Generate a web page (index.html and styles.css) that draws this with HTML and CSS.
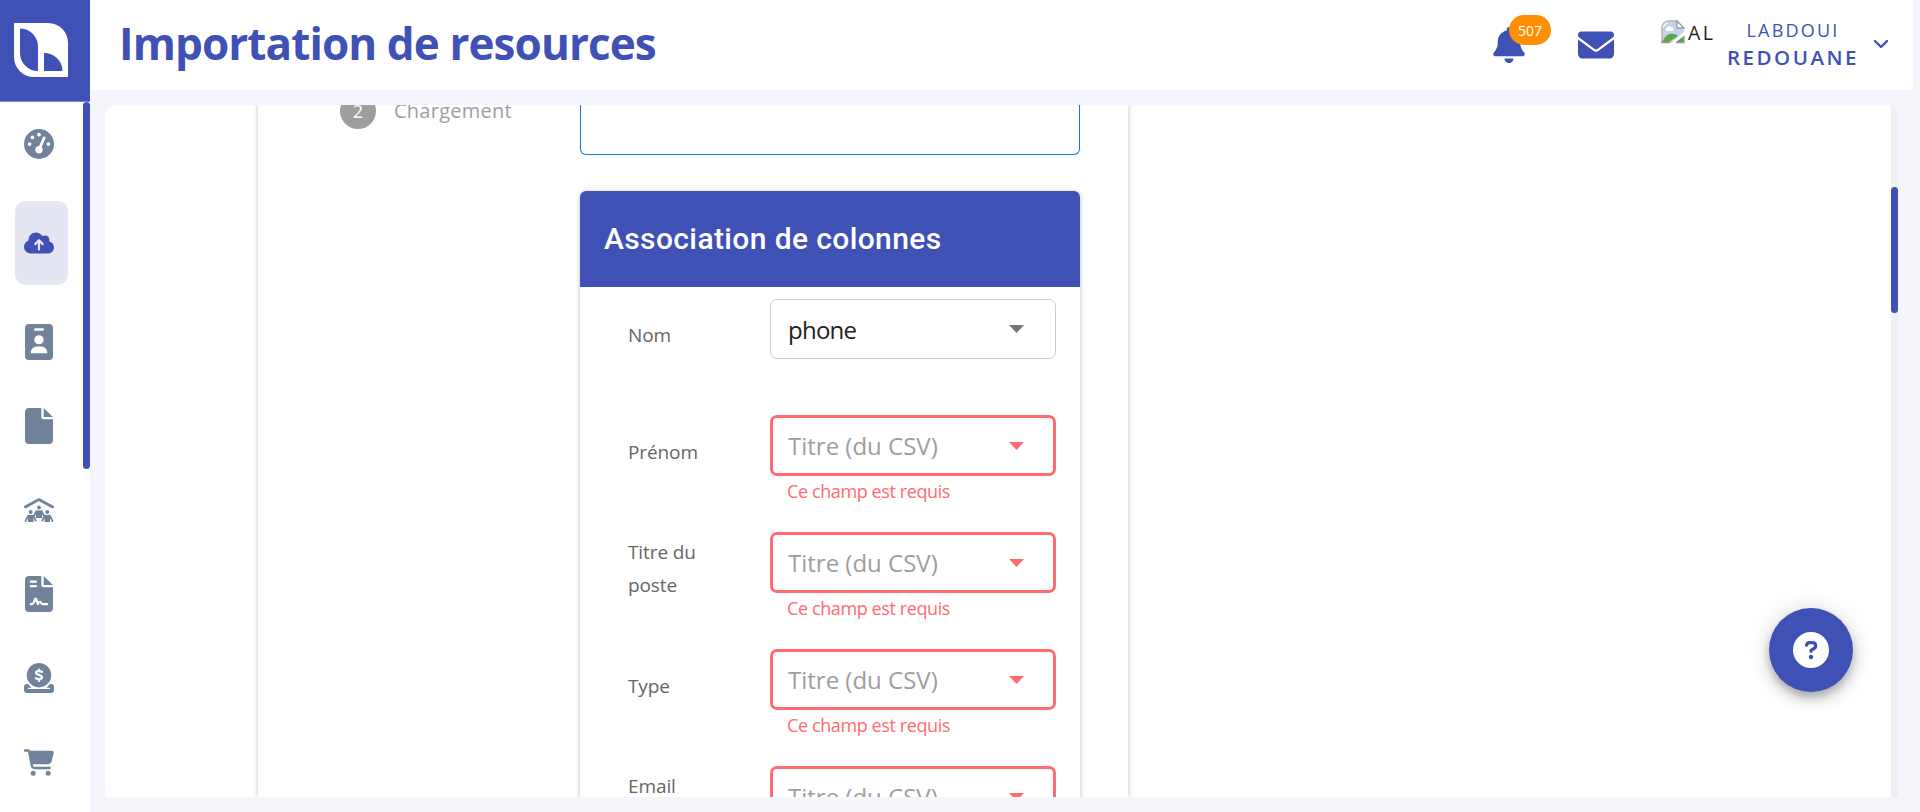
FILE: index.html
```html
<!DOCTYPE html>
<html lang="fr">
<head>
<meta charset="utf-8">
<title>Importation de resources</title>
<link rel="stylesheet" href="styles.css">
</head>
<body>
<div class="app">
  <aside class="sidebar">
    <a class="logo">
      <svg width="54" height="54" viewBox="0 0 54 54"><path fill="#fff" d="M0 0h34a20 20 0 0 1 20 20v34H20A20 20 0 0 1 0 34z"/><path fill="#3f51b5" d="M6 5.500a18 18 0 0 1 18 18V48A18 18 0 0 1 6 30zM30 30a18.500 18 0 0 1 18.500 18H30z"/></svg>
    </a>
    <div class="side-body">
      <nav class="nav">
        <a class="item"><svg width="30" height="30" viewBox="0 0 512 512"><path fill-rule="evenodd" d="M0 256a256 256 0 1 1 512 0A256 256 0 1 1 0 256zM288 96a32 32 0 1 0 -64 0 32 32 0 1 0 64 0zM256 416c35.300 0 64-28.700 64-64c0-17.400-6.900-33.100-18.100-44.600L366 161.700c5.300-12.100-.2-26.300-12.300-31.600s-26.300 .2-31.600 12.300L257.900 288c-.6 0-1.300 0-1.900 0c-35.300 0-64 28.700-64 64s28.700 64 64 64zM176 144a32 32 0 1 0 -64 0 32 32 0 1 0 64 0zM96 288a32 32 0 1 0 0-64 32 32 0 1 0 0 64zm352-32a32 32 0 1 0 -64 0 32 32 0 1 0 64 0z"/></svg></a>
        <a class="item active"><svg width="30" height="24" viewBox="0 0 640 512"><path d="M144 480C64.500 480 0 415.500 0 336c0-62.800 40.200-116.200 96.200-135.900c-.1-2.700-.2-5.400-.2-8.100c0-88.400 71.600-160 160-160c59.300 0 111 32.200 138.700 80.200C409.900 102 428.300 96 448 96c53 0 96 43 96 96c0 12.200-2.300 23.800-6.400 34.600C596 238.400 640 290.100 640 352c0 70.700-57.300 128-128 128H144zm79-217c-9.400 9.400-9.400 24.600 0 33.900s24.600 9.400 33.900 0l39-39V392c0 13.300 10.700 24 24 24s24-10.700 24-24V257.900l39 39c9.400 9.400 24.600 9.400 33.900 0s9.400-24.600 0-33.900l-80-80c-9.400-9.400-24.600-9.400-33.900 0l-80 80z"/></svg></a>
        <a class="item"><svg width="28" height="36" viewBox="0 0 384 512" preserveAspectRatio="none"><path fill-rule="evenodd" d="M56 0H328a56 56 0 0 1 56 56V456a56 56 0 0 1-56 56H56a56 56 0 0 1-56-56V56A56 56 0 0 1 56 0zM128 62v34h128V62zM192 288a64 64 0 1 0 0-128 64 64 0 1 0 0 128zM160 320a80 80 0 0 0-80 80v16H304v-16a80 80 0 0 0-80-80z"/></svg></a>
        <a class="item"><svg width="28" height="36" viewBox="0 0 384 512" preserveAspectRatio="none"><path d="M0 56A56 56 0 0 1 56 0H224V128a32 32 0 0 0 32 32H384V456a56 56 0 0 1-56 56H56a56 56 0 0 1-56-56zM256 0 384 128H256z"/></svg></a>
        <a class="item"><svg width="30" height="24" viewBox="0 0 30 24"><path fill="none" stroke="#71839b" stroke-width="2.600" stroke-linecap="round" stroke-linejoin="round" d="M1.300 9 15 1.500 28.700 9"/><circle cx="15" cy="9.500" r="1.900"/><circle cx="6.700" cy="14" r="1.900"/><circle cx="23.300" cy="14" r="1.900"/><path d="M12 12.500h6v7.500h-6zM4 17h5.500v7H4zM20.500 17H26v7h-5.500z"/><path fill="none" stroke="#71839b" stroke-width="1.700" stroke-linecap="round" d="M12.500 13 10.500 17M17.500 13l2 4M4.300 17.500 1.500 23M9.200 17.500l2.500 5M20.800 17.500l-2.500 5M25.700 17.500 28.500 23"/></svg></a>
        <a class="item"><svg width="28" height="36" viewBox="0 0 384 512" preserveAspectRatio="none"><path d="M0 56A56 56 0 0 1 56 0H224V128a32 32 0 0 0 32 32H384V456a56 56 0 0 1-56 56H56a56 56 0 0 1-56-56zM256 0 384 128H256z"/><path fill="none" stroke="#fff" stroke-width="30" stroke-linecap="round" stroke-linejoin="round" d="M80 80h70M80 144h70M80 400h10c18 0 27-8 32-24l14-44c5-14 16-14 20 0l20 68c10-25 28-42 42-22 8 16 14 22 26 22h60"/></svg></a>
        <a class="item"><svg width="30" height="30" viewBox="0 0 30 30"><path fill-rule="evenodd" d="M3 21h1.300a14.500 14.500 0 0 0 3.300 3.700H4.500a.6.600 0 0 0 0 1.300h21a.6.600 0 0 0 0-1.300h-3.100A14.500 14.500 0 0 0 25.700 21H27a3 3 0 0 1 3 3v3a3 3 0 0 1-3 3H3a3 3 0 0 1-3-3v-3a3 3 0 0 1 3-3z"/><circle cx="15" cy="12.200" r="12.200"/><path fill="none" stroke="#fff" stroke-width="2.200" stroke-linecap="round" d="M15 6.500v1.500M15 16.500V18M18 8.800c-2-1-6-1.200-6 1s6 2 6 4.400-4 2.300-6.200 1"/></svg></a>
        <a class="item"><svg width="30" height="27" viewBox="0 0 576 512"><path d="M0 24C0 10.700 10.700 0 24 0H69.500c22 0 41.500 12.800 50.600 32h411c26.300 0 45.500 25 38.600 50.400l-41 152.300c-8.500 31.400-37 53.300-69.500 53.300H170.700l5.400 28.500c2.200 11.300 12.100 19.500 23.600 19.500H488c13.300 0 24 10.700 24 24s-10.700 24-24 24H199.700c-34.600 0-64.300-24.600-70.700-58.500L77.400 54.500c-.7-3.800-4-6.500-7.900-6.500H24C10.700 48 0 37.300 0 24zM128 464a48 48 0 1 1 96 0 48 48 0 1 1 -96 0zm336-48a48 48 0 1 1 0 96 48 48 0 1 1 0-96z"/></svg></a>
      </nav>
      <div class="side-scroll"><div class="side-thumb"></div></div>
    </div>
  </aside>
  <div class="main">
    <header class="topbar">
      <h1 class="title"><span>Importation de resources</span></h1>
      <div class="bell">
        <svg width="32" height="36" viewBox="0 0 448 512"><path d="M224 0c-17.700 0-32 14.300-32 32V51.200C119 66 64 130.600 64 208v18.800c0 47-17.300 92.400-48.500 127.600l-7.400 8.300c-8.400 9.400-10.400 22.900-5.300 34.400S19.400 416 32 416H416c12.600 0 24-7.400 29.200-18.900s3.100-25-5.300-34.400l-7.400-8.300C401.300 319.200 384 273.900 384 226.800V208c0-77.400-55-142-128-156.800V32c0-17.700-14.300-32-32-32zm45.300 493.300c12-12 18.700-28.300 18.700-45.300H160c0 17 6.700 33.300 18.700 45.300s28.300 18.700 45.300 18.700s33.300-6.700 45.300-18.700z"/></svg>
        <span class="badge">507</span>
      </div>
      <svg class="mail" width="36" height="36" viewBox="0 0 512 512"><path d="M48 64C21.500 64 0 85.500 0 112c0 15.100 7.100 29.300 19.200 38.400L236.800 313.600c11.400 8.500 27 8.500 38.400 0L492.800 150.400c12.100-9.100 19.200-23.300 19.200-38.400c0-26.500-21.500-48-48-48H48zM0 176V384c0 35.300 28.700 64 64 64H448c35.300 0 64-28.700 64-64V176L294.400 339.200c-22.800 17.100-54 17.100-76.800 0L0 176z"/></svg>
      <div class="avatar">
        <svg width="24" height="24" viewBox="0 0 24 24"><path fill="#c3d3f2" d="M1 23V9l7-8h8v7h7v4L12 23z"/><path fill="none" stroke="#b5b5b5" stroke-width="1.500" d="M1 22V8a7 7 0 0 1 7-7h8"/><path fill="#fff" d="M5 9a3 3 0 0 1 5-2 2.500 2.500 0 0 1 2 4H5z"/><path fill="#58a83b" d="M1.500 22c3-9 11-10 15.500-6l-9 6z"/><path fill="#fff" stroke="#999" stroke-width="1.300" d="M16 1l7 7h-7z"/><path fill="#fff" d="M9 24 24 11v4L14 24z"/><path fill="#58a83b" d="M15 22l8-6v6z"/><path fill="none" stroke="#999" stroke-width="1.300" d="M0 22.500h9M15 22.500h8V16"/></svg>
        <span>AL</span>
      </div>
      <div class="user"><span class="last">LABDOUI</span><span class="first">REDOUANE</span></div>
      <svg class="chev" width="16" height="10" viewBox="0 0 16 10"><path fill="none" stroke="#3f51b5" stroke-width="2.400" stroke-linecap="round" stroke-linejoin="round" d="M2 2l6 6 6-6"/></svg>
    </header>
    <main class="content">
      <div class="scroller">
        <section class="wizard">
          <div class="steps"><span class="num">2</span><span class="step">Chargement</span></div>
          <div class="panel">
            <div class="drop"></div>
            <div class="card">
              <h2 class="card-head"><span>Association de colonnes</span></h2>
              <div class="rows">
                <div class="row first-row"><label class="label">Nom</label><div class="field"><div class="select"><span class="value">phone</span><i class="caret"></i></div></div></div>
                <div class="row"><label class="label">Prénom</label><div class="field"><div class="select error"><span class="hint">Titre (du CSV)</span><i class="caret"></i></div><p class="msg">Ce champ est requis</p></div></div>
                <div class="row"><label class="label">Titre du poste</label><div class="field"><div class="select error"><span class="hint">Titre (du CSV)</span><i class="caret"></i></div><p class="msg">Ce champ est requis</p></div></div>
                <div class="row"><label class="label">Type</label><div class="field"><div class="select error"><span class="hint">Titre (du CSV)</span><i class="caret"></i></div><p class="msg">Ce champ est requis</p></div></div>
                <div class="row"><label class="label">Email<br>principal</label><div class="field"><div class="select error"><span class="hint">Titre (du CSV)</span><i class="caret"></i></div></div></div>
              </div>
            </div>
          </div>
        </section>
      </div>
      <div class="track"><div class="thumb"></div></div>
    </main>
  </div>
  <button class="fab"><svg width="36" height="36" viewBox="0 0 36 36"><circle cx="18" cy="18" r="18" fill="#fff"/><path fill="none" stroke="#3f51b5" stroke-width="3.200" stroke-linecap="round" stroke-linejoin="round" d="M13.500 13.200c.3-1.800 1.300-2.600 3-2.600h2.800c3.800 0 4.500 4.400 1.600 6L18 18.300v1"/><circle cx="18" cy="25" r="2.200" fill="#3f51b5"/></svg></button>
</div>
</body>
</html>
```
FILE: styles.css
```css
* { box-sizing: border-box; }
body { margin: 0; font-family: "Open Sans", "Noto Sans", sans-serif; background: #f5f6fb; }
.app { display: flex; width: 100vw; height: 812px; overflow: hidden; }
svg { display: block; flex: none; }

.sidebar { width: 90px; flex: none; display: flex; flex-direction: column; background: #fff; }
.logo { height: 102px; flex: none; padding: 23px 0 0 14px; background: #3f51b5; border-bottom: 1px solid #7c83e0; }
.side-body { flex: 1; display: flex; min-height: 0; }
.nav { flex: 1; padding-left: 15px; overflow: hidden; }
.item { display: flex; width: 53px; height: 84px; padding-right: 5px; align-items: center; justify-content: center; fill: #71839b; }
.item.active { margin: 15px 0; background: #e4e6f3; border-radius: 10px; fill: #3f51b5; }
.side-scroll { width: 7px; }
.side-thumb { height: 367px; border-radius: 4px; background: #3f51b5; }

.main { flex: 1; min-width: 0; display: flex; flex-direction: column; }
.topbar { width: 1823px; height: 90px; flex: none; display: flex; align-items: flex-start; padding-left: 29px; background: #fff; fill: #3f51b5; color: #3f51b5; }
.title { flex: 1; margin: 0; font-size: 44px; line-height: 60px; font-weight: 700; letter-spacing: -0.9px; padding-top: 13px; white-space: nowrap; }
.bell { position: relative; width: 32px; margin: 27px 53px 0 0; }
.badge { position: absolute; left: 16px; top: -12px; width: 42px; height: 30px; border-radius: 15px; background: #ff8f00; color: #fff; font-size: 14px; line-height: 32px; text-align: center; }
.mail { margin: 27px 47px 0 0; }
.avatar { display: flex; width: 57px; gap: 3px; padding-top: 20px; color: #222; font-size: 19.500px; line-height: 26px; letter-spacing: 2.400px; }
.user { width: 150px; display: flex; flex-direction: column; align-items: center; padding-top: 17px; }
.last { font-size: 18px; line-height: 27px; letter-spacing: 2.200px; }
.first { font-size: 20.500px; line-height: 26px; font-weight: 600; letter-spacing: 2.500px; }
.chev { margin: 39px 24px 0 5px; }

.content { margin: 15px 22px 15px 15px; height: 692px; display: flex; overflow: hidden; border-radius: 12px 12px 0 0; background: #fff; }
.scroller { flex: 1; padding-left: 153px; overflow: hidden; }
.track { width: 7px; background: #f0f0f0; padding-top: 82px; }
.thumb { height: 126px; border-radius: 4px; background: #3f51b5; }
.wizard { width: 870px; height: 692px; display: flex; box-shadow: 0 0 5px rgba(0,0,0,.25); }
.steps { width: 322px; height: 24px; display: flex; align-items: flex-end; padding-left: 82px; }
.num { width: 36px; height: 36px; border-radius: 50%; background: #9e9e9e; color: #fff; font-size: 18px; line-height: 36px; text-align: center; flex: none; }
.step { color: #9e9e9e; font-size: 20px; line-height: 36px; margin-left: 18px; letter-spacing: .25px; }
.panel { width: 500px; }
.drop { height: 50px; border: 1px solid #1976d2; border-top: 0; border-radius: 0 0 6px 6px; }
.card { height: 700px; margin-top: 36px; border-radius: 6px; box-shadow: 0 1px 5px rgba(0,0,0,.26); background: #fff; }
.card-head { height: 96px; margin: 0; padding-left: 24px; border-radius: 6px 6px 0 0; background: #3f51b5; color: #fff; font: 500 30px/96px Roboto, sans-serif; letter-spacing: .38px; }
.rows { padding: 12px 24px 0 48px; }
.row { height: 117px; display: flex; }
.first-row { height: 116px; }
.label { width: 142px; height: 74px; padding-right: 50px; display: flex; align-items: center; color: #666; font-size: 19px; line-height: 33px; letter-spacing: -.1px; }
.first-row .label { height: 72px; }
.field { width: 286px; }
.select { height: 60px; display: flex; align-items: center; justify-content: space-between; padding: 0 31px 0 17px; border: 1px solid #ccc; border-radius: 7px; font-size: 24px; color: #222; }
.select.error { height: 61px; padding: 0 29px 0 15px; border: 3px solid #ff6b6e; }
.value { letter-spacing: -.75px; }
.hint { color: #9e9e9e; }
.caret { width: 15px; height: 8px; background: #757575; clip-path: polygon(0 0, 100% 0, 50% 100%); }
.error .caret { background: #ff6b6e; margin-top: 1px; }
.msg { margin: 3px 0 0 17px; color: #ff6b6e; font-size: 18px; line-height: 25px; letter-spacing: -.4px; white-space: nowrap; }
.fab { position: absolute; left: 1769px; top: 608px; width: 84px; height: 84px; padding: 0; border: 0; border-radius: 50%; background: #3f51b5; display: flex; align-items: center; justify-content: center; box-shadow: 0 5px 8px -1px rgba(0,0,0,.2), 0 8px 15px rgba(0,0,0,.14), 0 1px 27px rgba(0,0,0,.12); }
```
